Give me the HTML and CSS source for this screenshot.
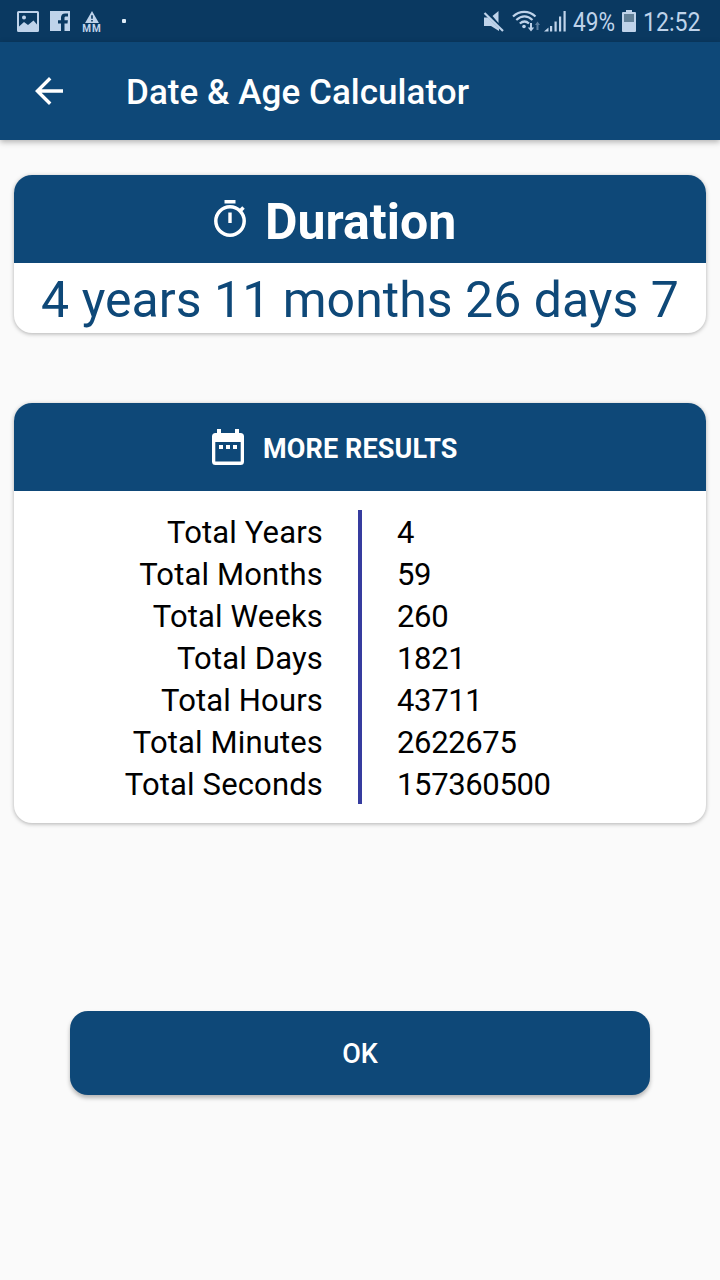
FILE: index.html
```html
<!DOCTYPE html>
<html lang="en">
<head>
  <meta charset="UTF-8" />
  <meta name="viewport" content="width=device-width, initial-scale=1.0"/>
  <title>Date &amp; Age Calculator</title>
  <link rel="stylesheet" href="styles.css">
</head>
<body>

  <!-- Status bar -->
  <div class="status-bar">
    <div class="status-left">
      <svg class="icon-picture" width="22" height="21" viewBox="0 0 22 21">
        <path fill-rule="evenodd" d="M1.500 0h19A1.500 1.500 0 0 1 22 1.500v18a1.500 1.500 0 0 1-1.500 1.500h-19A1.500 1.500 0 0 1 0 19.500v-18A1.500 1.500 0 0 1 1.500 0zM2 2v13.500l5-4.500 4 3 5.500-4.500 3.500 4V2zM7 4.500a2 2 0 1 1 0 4 2 2 0 0 1 0-4z"/>
      </svg>
      <svg class="icon-facebook" width="20" height="20" viewBox="0 0 20 20">
        <path d="M0 0h20v20h-5.500v-7.500h3l.4-3.200h-3.400V7c0-1 .4-1.500 1.500-1.500h2V2.400h-2.800C12.500 2.400 11 4 11 6.500v2.800H8v3.200h3V20H0z"/>
      </svg>
      <div class="mm">
        <svg width="14" height="12" viewBox="0 0 15 13">
          <path fill-rule="evenodd" d="M7.500 0L15 13H0zM6.600 4.500v4h1.800v-4zM6.600 9.800v1.700h1.800V9.800z"/>
        </svg>
        <span>MM</span>
      </div>
      <span class="dot"></span>
    </div>

    <div class="status-right">
      <svg width="84" height="26" viewBox="0 0 84 26">
        <!-- muted speaker -->
        <path d="M1 9.500h4l11 11V23L8 18H1zM9.500 8L15.500 3v12z"/>
        <path class="line" d="M1.500 5L20 23" stroke-width="2.200"/>
        <!-- wifi -->
        <path class="line" d="M30 8.500C36.500 2.200 46 2.200 52.500 8.500M33.300 12C38.500 7.500 44.500 7.500 49.500 12M36.800 15.500C40 12.800 43 12.800 46 15.500" stroke-width="2.200"/>
        <circle cx="41" cy="18.500" r="1.800"/>
        <path class="line" d="M48 15v6" stroke-width="2"/>
        <path d="M44.800 19.500h6.400L48 23.500z"/>
        <path class="dim" d="M53.500 22v-5H52l2.500-3.500L57 17h-1.500v5z"/>
        <!-- signal -->
        <path d="M61 23.500l4.500-4v4zM67 18h2.200v5.500H67zM71.500 13.500h2.200v10h-2.200zM76 8.500h2.200v15H76zM80.500 3h2.200v20.500h-2.200z"/>
      </svg>
      <span class="battery-text">49%</span>
      <svg class="icon-battery" width="14" height="22" viewBox="0 0 14 22">
        <path d="M4 0h6v2h3a1 1 0 0 1 1 1v18a1 1 0 0 1-1 1H1a1 1 0 0 1-1-1V3a1 1 0 0 1 1-1h3z"/>
        <path class="battery-empty" d="M2 4h10v8H2z"/>
      </svg>
      <span class="clock">12:52</span>
    </div>
  </div>

  <!-- App bar -->
  <header class="app-bar">
    <svg width="28" height="28" viewBox="0 0 28 28">
      <path d="M28 12.300v3.400H6.600l9.800 9.800L14 28 0 14 14 0l2.400 2.500-9.800 9.800z"/>
    </svg>
    <h1>Date &amp; Age Calculator</h1>
  </header>

  <main>
    <section class="card duration">
      <h2 class="card-header">
        <svg width="32" height="37" viewBox="0 0 32 37">
          <path d="M10.500 0h11v3.500h-11zM14.300 12.500h3.400v10.500h-3.400z"/>
          <circle class="ring" cx="16" cy="21" r="14.200"/>
          <path class="ring" d="M26 11l3.500-3.500"/>
        </svg>
        <span>Duration</span>
      </h2>
      <p class="duration-value">4 years 11 months 26 days 7</p>
    </section>

    <section class="card results">
      <h2 class="card-header">
        <svg width="32" height="36" viewBox="0 0 32 36">
          <path fill-rule="evenodd" d="M5 0h4v4h14V0h4v4h1.500A3.500 3.500 0 0 1 32 7.500v25a3.500 3.500 0 0 1-3.500 3.500h-25A3.500 3.500 0 0 1 0 32.500v-25A3.500 3.500 0 0 1 3.500 4H5zM3.300 13v19.500h25.400V13z"/>
          <path d="M7 16h4v4H7zM14 16h4v4h-4zM21 16h4v4h-4z"/>
        </svg>
        <span>MORE RESULTS</span>
      </h2>
      <div class="results-body">
        <div class="labels">
          <div>Total Years</div>
          <div>Total Months</div>
          <div>Total Weeks</div>
          <div>Total Days</div>
          <div>Total Hours</div>
          <div>Total Minutes</div>
          <div>Total Seconds</div>
        </div>
        <div class="divider"></div>
        <div class="values">
          <div>4</div>
          <div>59</div>
          <div>260</div>
          <div>1821</div>
          <div>43711</div>
          <div>2622675</div>
          <div>157360500</div>
        </div>
      </div>
    </section>

    <button type="button" class="ok-btn">OK</button>
  </main>

</body>
</html>
```

FILE: styles.css
```css
:root {
  --primary: #0e4878;
  --primary-dark: #0a3961;
  --status-color: #bfd3ea;
  --divider: #363c9f;
}

* {
  box-sizing: border-box;
  font-family: Roboto, sans-serif;
}

body {
  margin: 0;
  background: #fafafa;
  color: #000;
  min-height: 100vh;
}

svg {
  display: block;
  flex-shrink: 0;
  fill: currentColor;
}

h1,
h2,
p {
  margin: 0;
}

.status-bar {
  height: 42px;
  padding: 0 19px 0 17px;
  display: flex;
  justify-content: space-between;
  background: var(--primary-dark);
  color: var(--status-color);
}

.status-left,
.status-right {
  display: flex;
  align-items: center;
}

.icon-facebook {
  margin-left: 11px;
}

.mm {
  margin-left: 12px;
  padding-top: 1px;
  width: 20px;
  display: flex;
  flex-direction: column;
  align-items: center;
  gap: 1px;
}

.mm span {
  font-size: 10px;
  font-weight: 700;
  line-height: 9px;
  letter-spacing: 1px;
}

.dot {
  width: 4px;
  height: 4px;
  margin-left: 20px;
  border-radius: 1px;
  background: #e0edf8;
}

.line {
  fill: none;
  stroke: currentColor;
}

.dim {
  opacity: 0.45;
}

.battery-text,
.clock {
  font-size: 26px;
  line-height: 42px;
  padding-top: 2px;
  transform-origin: left center;
  white-space: nowrap;
}

.battery-text {
  width: 42px;
  margin-left: 6px;
  transform: scaleX(0.87);
}

.icon-battery {
  margin-left: 7px;
}

.battery-empty {
  fill: #638198;
}

.clock {
  width: 58px;
  margin-left: 7px;
  transform: scaleX(0.89);
}

.app-bar {
  height: 98px;
  padding-left: 35px;
  display: flex;
  align-items: center;
  gap: 63px;
  background: var(--primary);
  color: #fff;
  box-shadow: 0 2px 6px rgba(0, 0, 0, 0.3);
}

.app-bar h1 {
  font-size: 35px;
  font-weight: 500;
  letter-spacing: 0.05px;
  padding-top: 2px;
}

main {
  display: flex;
  flex-direction: column;
  padding: 35px 14px 0;
}

.card {
  background: #fff;
  border-radius: 18px;
  overflow: hidden;
  box-shadow: 0 1px 4px rgba(0, 0, 0, 0.3);
}

.card-header {
  height: 88px;
  display: flex;
  align-items: center;
  background: var(--primary);
  color: #fff;
}

.duration {
  height: 158px;
}

.duration .card-header {
  padding-left: 200px;
  gap: 19px;
  font-size: 50px;
}

.duration .card-header svg {
  margin-bottom: 2px;
}

.duration .card-header span {
  padding-top: 5px;
}

.ring {
  fill: none;
  stroke: currentColor;
  stroke-width: 3.5;
}

.duration-value {
  height: 70px;
  padding-top: 2px;
  line-height: 70px;
  font-size: 50px;
  letter-spacing: 0.03px;
  text-align: center;
  white-space: nowrap;
  color: var(--primary);
}

.results {
  height: 420px;
  margin-top: 70px;
}

.results .card-header {
  padding-left: 198px;
  gap: 19px;
  font-size: 27px;
  letter-spacing: 0.12px;
}

.results .card-header span {
  padding-top: 3px;
}

.results-body {
  display: grid;
  grid-template-columns: 1fr 4px 1fr;
  padding-top: 19px;
  font-size: 31px;
  line-height: 42px;
}

.labels {
  padding: 2px 35px 0 0;
  text-align: right;
  letter-spacing: 0.15px;
}

.divider {
  height: 294px;
  background: var(--divider);
}

.values {
  padding: 2px 0 0 35px;
  letter-spacing: -0.35px;
}

.ok-btn {
  height: 84px;
  margin: 188px 56px 0;
  padding: 2px 0 0;
  border: none;
  border-radius: 18px;
  background: var(--primary);
  color: #fff;
  font-size: 27px;
  font-weight: 500;
  box-shadow: 0 3px 4px rgba(0, 0, 0, 0.28);
  cursor: pointer;
}
```
